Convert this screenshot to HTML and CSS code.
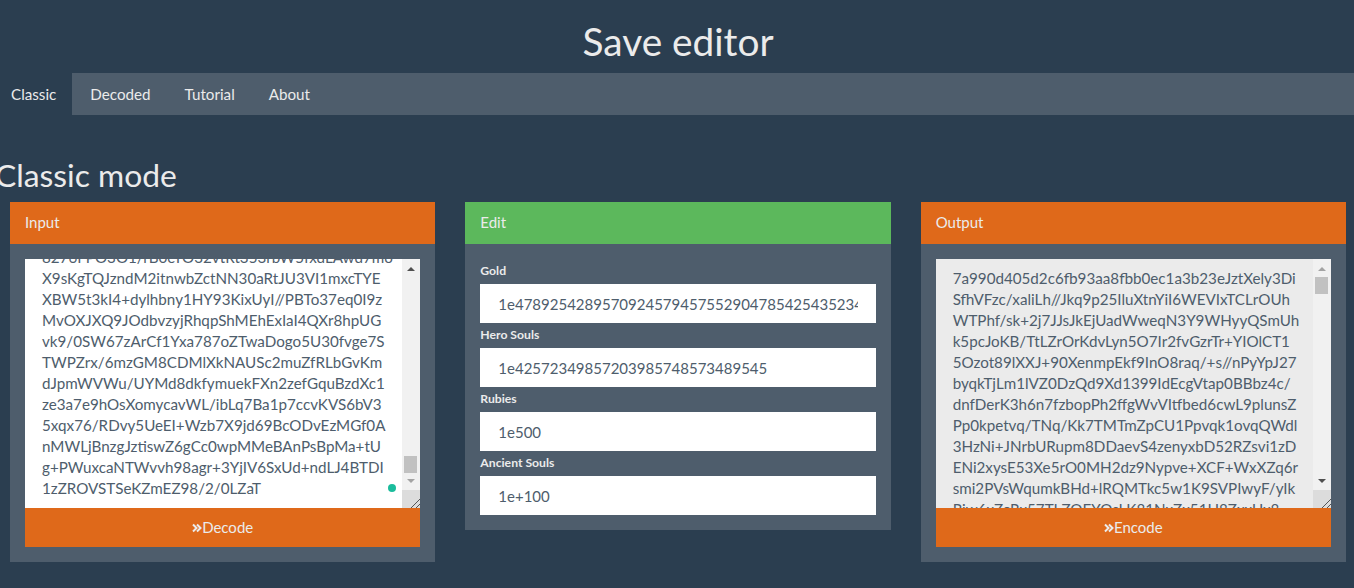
FILE: index.html
```html
<!DOCTYPE html>
<html lang="en">
<head>
<meta charset="utf-8">
<title>Save editor</title>
<link rel="stylesheet" href="styles.css">
</head>
<body>
<div class="page">
  <h1 class="title">Save editor</h1>
  <nav class="tabs">
    <a class="tab active">Classic</a>
    <a class="tab">Decoded</a>
    <a class="tab">Tutorial</a>
    <a class="tab">About</a>
  </nav>
  <h2 class="mode">Classic mode</h2>
  <div class="columns">
    <section class="panel">
      <header class="panel-head orange">Input</header>
      <div class="panel-body">
        <div class="textbox">
          <div class="textview scrolled">8276FPO3O1/rB0eTO32vtRt353rbW5fxdLAwd7mo
X9sKgTQJzndM2itnwbZctNN30aRtJU3VI1mxcTYE
XBW5t3kI4+dylhbny1HY93KixUyI//PBTo37eq0I9z
MvOXJXQ9JOdbvzyjRhqpShMEhExIaI4QXr8hpUG
vk9/0SW67zArCf1Yxa787oZTwaDogo5U30fvge7S
TWPZrx/6mzGM8CDMlXkNAUSc2muZfRLbGvKm
dJpmWVWu/UYMd8dkfymuekFXn2zefGquBzdXc1
ze3a7e9hOsXomycavWL/ibLq7Ba1p7ccvKVS6bV3
5xqx76/RDvy5UeEI+Wzb7X9jd69BcODvEzMGf0A
nMWLjBnzgJztiswZ6gCc0wpMMeBAnPsBpMa+tU
g+PWuxcaNTWvvh98agr+3YjIV6SxUd+ndLJ4BTDI
1zZROVSTSeKZmEZ98/2/0LZaT</div>
          <span class="dot"></span>
          <div class="scrollbar">
            <svg class="arrow arrow-up" width="8" height="4" viewBox="0 0 8 4"><path d="M4 0 8 4H0z" fill="#505050"/></svg>
            <div class="track"><div class="thumb thumb-end"></div></div>
            <svg class="arrow arrow-down" width="8" height="4" viewBox="0 0 8 4"><path d="M0 0H8L4 4z" fill="#a3a3a3"/></svg>
            <div class="corner"><svg width="10" height="10" viewBox="0 0 10 10"><path d="M1 10 10 1M6 10 10 6" stroke="#555" fill="none"/></svg></div>
          </div>
        </div>
        <button class="action"><svg class="chev" width="10" height="10" viewBox="0 0 10 10"><path d="M1 1.5 4.5 5 1 8.5M5 1.5 8.5 5 5 8.5" stroke="#ebebeb" stroke-width="2" fill="none"/></svg>Decode</button>
      </div>
    </section>
    <section class="panel">
      <header class="panel-head green">Edit</header>
      <div class="panel-body edit-body">
        <label class="field-label">Gold</label>
        <input class="field" value="1e4789254289570924579457552904785425435234">
        <label class="field-label">Hero Souls</label>
        <input class="field" value="1e42572349857203985748573489545">
        <label class="field-label">Rubies</label>
        <input class="field" value="1e500">
        <label class="field-label">Ancient Souls</label>
        <input class="field" value="1e+100">
      </div>
    </section>
    <section class="panel">
      <header class="panel-head orange">Output</header>
      <div class="panel-body">
        <div class="textbox readonly">
          <div class="textview">7a990d405d2c6fb93aa8fbb0ec1a3b23eJztXely3Di
SfhVFzc/xaliLh//Jkq9p25IluXtnYiI6WEVIxTCLrOUh
WTPhf/sk+2j7JJsJkEjUadWweqN3Y9WHyyQSmUh
k5pcJoKB/TtLZrOrKdvLyn5O7Ir2fvGzrTr+YIOlCT1
5Ozot89lXXJ+90XenmpEkf9InO8raq/+s//nPyYpJ27
byqkTjLm1lVZ0DzQd9Xd1399IdEcgVtap0BBbz4c/
dnfDerK3h6n7fzbopPh2ffgWvVItfbed6cwL9plunsZ
Pp0kpetvq/TNq/Kk7TMTmZpCU1Ppvqk1ovqQWdl
3HzNi+JNrbURupm8DDaevS4zenyxbD52RZsvi1zD
ENi2xysE53Xe5rO0MH2dz9Nypve+XCF+WxXZq6r
smi2PVsWqumkBHd+lRQMTkc5w1K9SVPIwyF/yIk
Riw6xZcRx57TLZQEYQsLK81NxZx51H8ZxxUx8</div>
          <div class="scrollbar">
            <svg class="arrow arrow-up" width="8" height="4" viewBox="0 0 8 4"><path d="M4 0 8 4H0z" fill="#a3a3a3"/></svg>
            <div class="track"><div class="thumb"></div></div>
            <svg class="arrow arrow-down" width="8" height="4" viewBox="0 0 8 4"><path d="M0 0H8L4 4z" fill="#505050"/></svg>
            <div class="corner"><svg width="10" height="10" viewBox="0 0 10 10"><path d="M1 10 10 1M6 10 10 6" stroke="#555" fill="none"/></svg></div>
          </div>
        </div>
        <button class="action"><svg class="chev" width="10" height="10" viewBox="0 0 10 10"><path d="M1 1.5 4.5 5 1 8.5M5 1.5 8.5 5 5 8.5" stroke="#ebebeb" stroke-width="2" fill="none"/></svg>Encode</button>
      </div>
    </section>
  </div>
</div>
</body>
</html>
```
FILE: styles.css
```css
* { box-sizing: border-box; }
html, body { margin: 0; height: 100%; overflow: hidden; }
body {
  background: #2b3e50;
  color: #ebebeb;
  font-family: Lato, "Open Sans", sans-serif;
  font-size: 15px;
  line-height: 21px;
}
.page { width: 1366px; margin-left: -5px; }
.title {
  margin: 0;
  height: 73px;
  padding-top: 21px;
  font-size: 38.8px;
  line-height: 40px;
  font-weight: 400;
  text-align: center;
}
.tabs {
  display: flex;
  height: 42px;
  background: #4e5d6c;
}
.tab { padding: 11px 16px 10px; margin-right: 2px; color: #ebebeb; font-size: 15.2px; }
.tab.active { background: #2b3e50; }
.mode {
  margin: 0;
  height: 87px;
  padding-top: 43px;
  font-size: 31.8px;
  line-height: 35px;
  font-weight: 400;
}
.columns {
  display: grid;
  grid-template-columns: repeat(3, minmax(0, 1fr));
  align-items: start;
}
.panel { margin: 0 15px; background: #4e5d6c; }
.panel-head { height: 42px; padding: 10px 15px; }
.orange { background: #df691a; }
.green { background: #5cb85c; }
.panel-body { padding: 15px; }
.textbox {
  display: flex;
  height: 249px;
  background: #fff;
  position: relative;
  overflow: hidden;
}
.textbox.readonly { background: #ebebeb; }
.textview {
  flex: 1;
  min-width: 0;
  padding: 9px 16px 0 17px;
  color: #4e5d6c;
  font-size: 15.2px;
  white-space: pre;
  overflow: hidden;
}
.textview.scrolled { padding-top: 0; margin-top: -12px; }
.dot {
  position: absolute;
  left: 363px;
  top: 225px;
  width: 8px;
  height: 8px;
  border-radius: 50%;
  background: #1abc9c;
}
.scrollbar {
  flex: 0 0 18px;
  display: flex;
  flex-direction: column;
  align-items: center;
  background: #f1f1f1;
}
.arrow { flex: none; }
.arrow-up { margin: 8px 0 6px; }
.arrow-down { margin: 6px 0 7px; }
.track { flex: 1; width: 100%; padding: 0 3px 0 2px; display: flex; flex-direction: column; }
.thumb { height: 17px; background: #c1c1c1; }
.thumb-end { margin-top: auto; }
.corner {
  flex: none;
  width: 100%;
  height: 18px;
  background: #dcdcdc;
  display: flex;
  align-items: flex-end;
  justify-content: flex-end;
}
.corner svg { display: block; }
.action {
  display: flex;
  align-items: center;
  justify-content: center;
  width: 100%;
  height: 39px;
  border: 0;
  background: #df691a;
  color: #ebebeb;
  font: inherit;
}
.chev { flex: none; }
.edit-body { display: flex; flex-direction: column; }
.field-label {
  height: 25px;
  padding-top: 3px;
  font-size: 12.2px;
  line-height: 18px;
  font-weight: 700;
}
.field {
  height: 39px;
  border: 0;
  padding: 0 18px;
  background: #fff;
  color: #4e5d6c;
  font: inherit;
  width: 100%;
}
```
